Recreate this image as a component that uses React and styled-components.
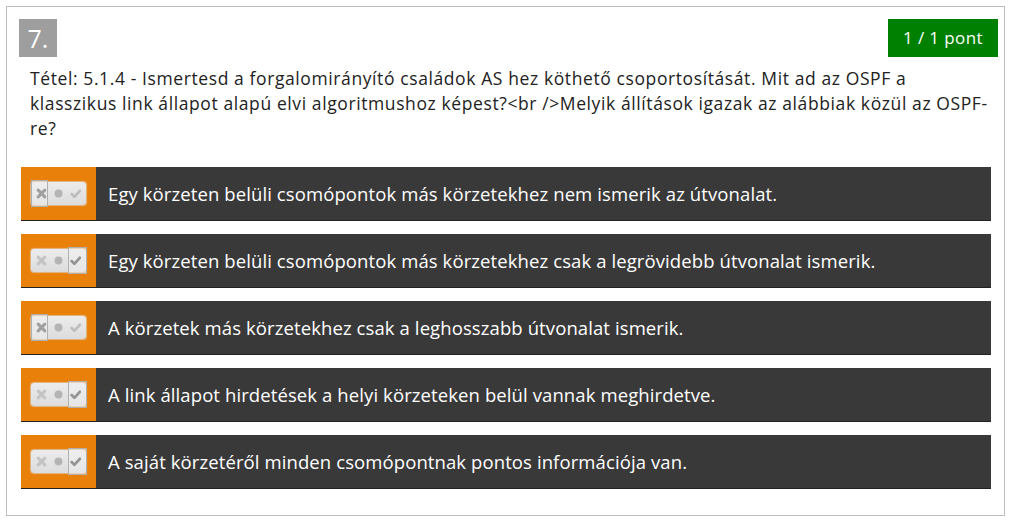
import React from 'react';
import styled, { createGlobalStyle } from 'styled-components';

const GlobalStyle = createGlobalStyle`
  body {
    margin: 0;
    background: #fff;
    font-family: 'Open Sans', 'Liberation Sans', sans-serif;
  }
`;

const Card = styled.div`
  margin: 6px;
  width: 999px;
  border: 1px solid #bdbdbd;
  padding: 12px 6px 26px 12px;
  box-sizing: border-box;
`;

const Header = styled.div`
  display: flex;
  justify-content: space-between;
  align-items: flex-start;
`;

const Number = styled.div`
  width: 38px;
  height: 38px;
  background: #9e9e9e;
  color: #fff;
  font-size: 25px;
  line-height: 38px;
  text-align: center;
`;

const Score = styled.div`
  width: 110px;
  height: 38px;
  background: #008000;
  color: #fff;
  font-size: 17px;
  letter-spacing: 0.4px;
  line-height: 38px;
  text-align: center;
`;

const Question = styled.p`
  margin: 9px 0 0 11px;
  padding-right: 10px;
  color: #222;
  font-size: 17.5px;
  letter-spacing: 0.6px;
  line-height: 25px;
`;

const Options = styled.div`
  display: flex;
  flex-direction: column;
  gap: 13px;
  margin: 26px 7px 0 2px;
`;

const Option = styled.div`
  display: flex;
  height: 54px;
  background: #393939;
  border-bottom: 1px solid #222;
  box-sizing: border-box;
`;

const Handle = styled.div`
  width: 75px;
  flex-shrink: 0;
  background: #e8800a;
  display: flex;
  align-items: center;
  padding-left: 10px;
  box-sizing: border-box;
`;

const Label = styled.div`
  color: #fff;
  font-size: 18.5px;
  letter-spacing: 0.1px;
  padding-left: 12px;
  display: flex;
  align-items: center;
`;

const Pill = styled.div`
  position: relative;
  width: 55px;
  height: 23px;
  border-radius: 3px;
  background: linear-gradient(#ececec, #dcdcdc);
  box-shadow: 0 0 1px 1px rgba(220, 220, 220, 0.6);
  display: flex;
  align-items: center;
  justify-content: space-around;
  padding: 0 2px;
  box-sizing: border-box;
`;

const Selected = styled.div`
  position: absolute;
  top: -2px;
  bottom: -2px;
  width: ${(p) => (p.$side === 'left' ? '17px' : '19px')};
  ${(p) => (p.$side === 'left' ? 'left: 0;' : 'right: -1px;')}
  border: 1.5px solid #b0b0b0;
  background: rgba(240, 240, 240, 0.5);
  box-sizing: border-box;
`;

const Glyph = styled.svg`
  position: relative;
  width: 11px;
  height: 11px;
`;

const Toggle = ({ value }) => (
  <Pill>
    <Selected $side={value ? 'right' : 'left'} />
    <Glyph viewBox="0 0 10 10">
      <path d="M2 2 L8 8 M8 2 L2 8" stroke={value ? '#c4c4c4' : '#a0a0a0'} strokeWidth="2.8" strokeLinecap="round" />
    </Glyph>
    <Glyph viewBox="0 0 10 10">
      <circle cx="5" cy="5" r="3.6" fill="#b4b4b4" />
    </Glyph>
    <Glyph viewBox="0 0 10 10">
      <path d="M1.5 5.5 L4 8 L9 2.5" fill="none" stroke={value ? '#949494' : '#bdbdbd'} strokeWidth="2.4" strokeLinecap="round" strokeLinejoin="round" />
    </Glyph>
  </Pill>
);

const answers = [
  { text: 'Egy körzeten belüli csomópontok más körzetekhez nem ismerik az útvonalat.', value: false },
  { text: 'Egy körzeten belüli csomópontok más körzetekhez csak a legrövidebb útvonalat ismerik.', value: true },
  { text: 'A körzetek más körzetekhez csak a leghosszabb útvonalat ismerik.', value: false },
  { text: 'A link állapot hirdetések a helyi körzeteken belül vannak meghirdetve.', value: true },
  { text: 'A saját körzetéről minden csomópontnak pontos információja van.', value: true },
];

export default function App() {
  return (
    <>
      <GlobalStyle />
      <Card>
        <Header>
          <Number>7.</Number>
          <Score>1 / 1 pont</Score>
        </Header>
        <Question>
          Tétel: 5.1.4 - Ismertesd a forgalomirányító családok AS hez köthető csoportosítását. Mit ad az OSPF a
          klasszikus link állapot alapú elvi algoritmushoz képest?&lt;br /&gt;Melyik állítások igazak az alábbiak közül az
          OSPF-re?
        </Question>
        <Options>
          {answers.map((a) => (
            <Option key={a.text}>
              <Handle>
                <Toggle value={a.value} />
              </Handle>
              <Label>{a.text}</Label>
            </Option>
          ))}
        </Options>
      </Card>
    </>
  );
}
